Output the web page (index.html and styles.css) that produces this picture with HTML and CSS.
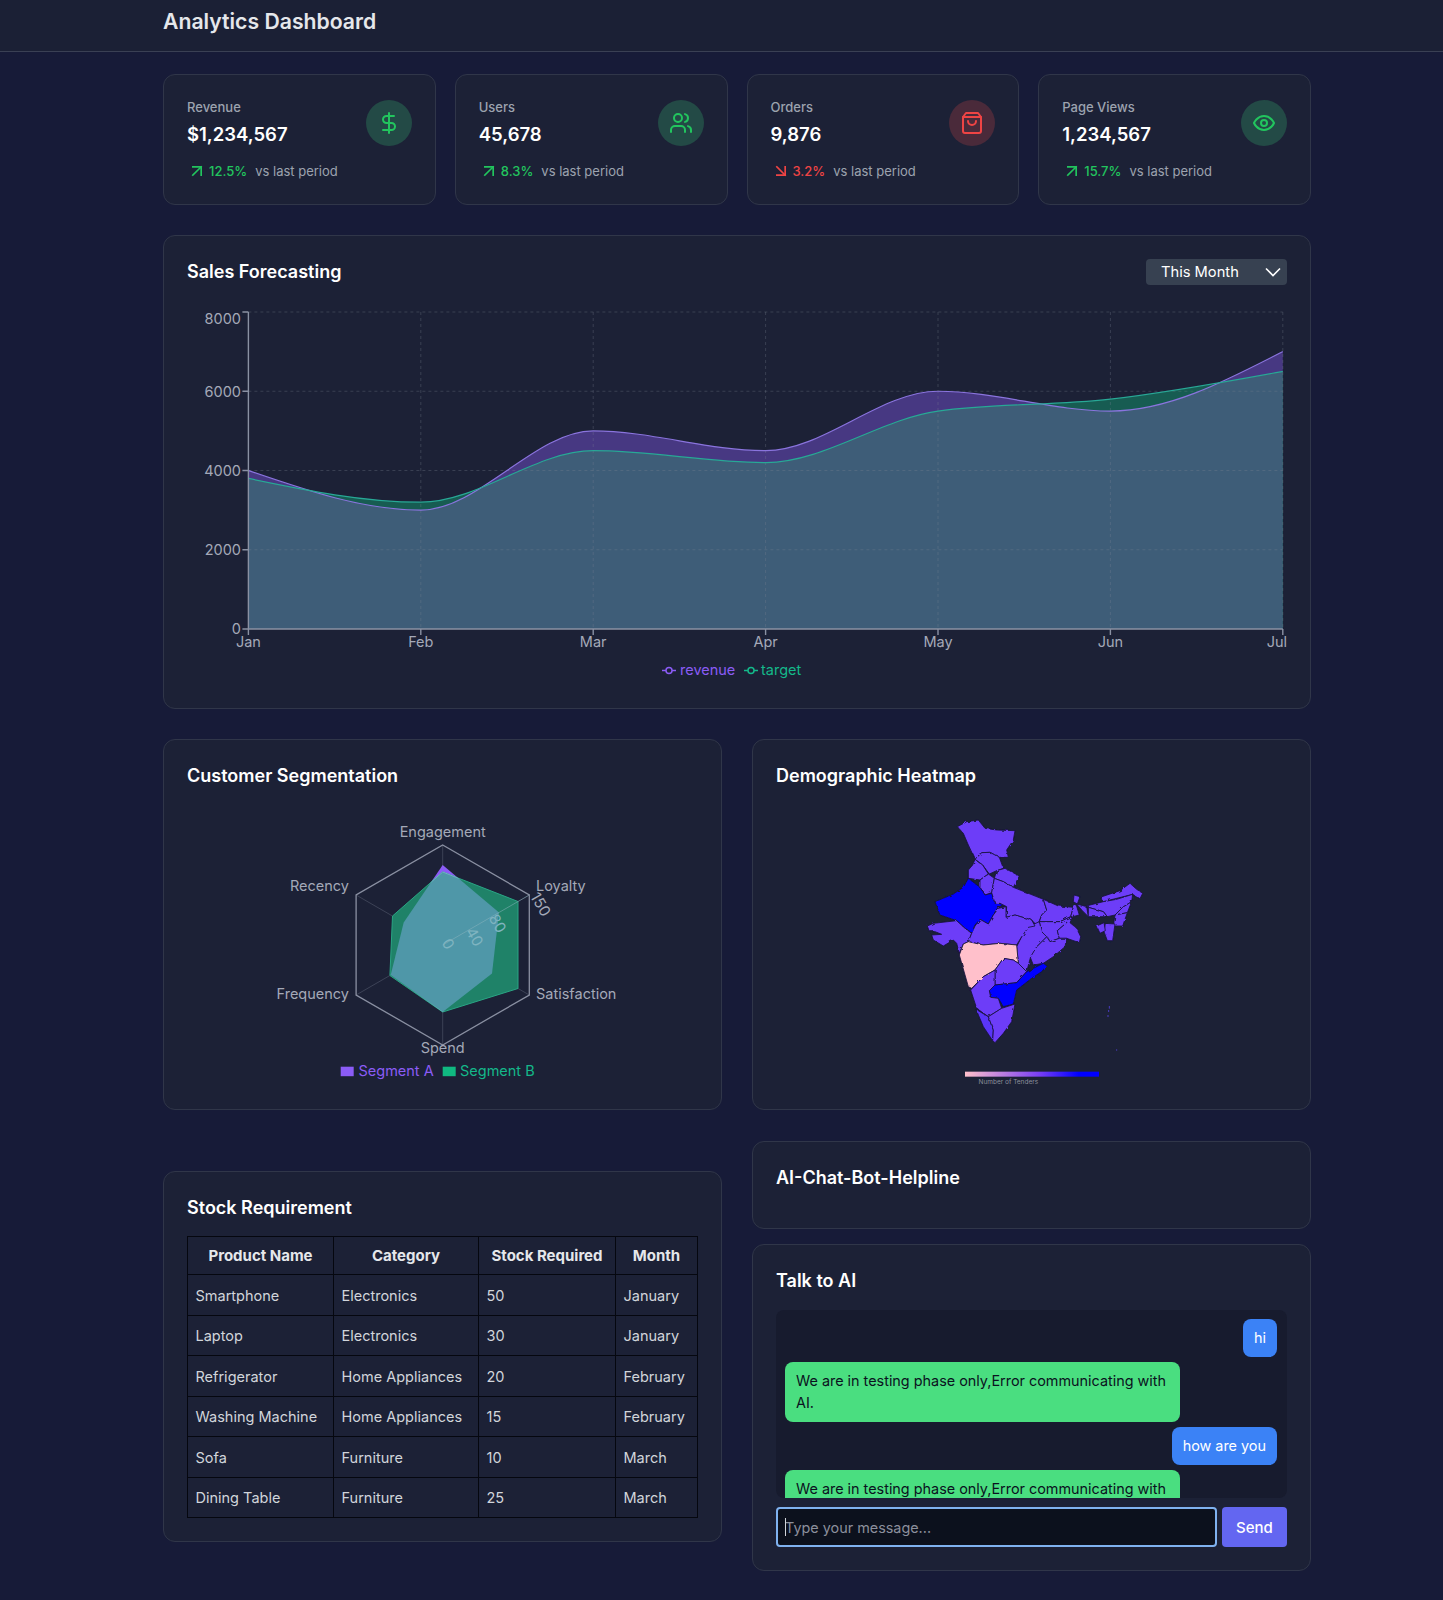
FILE: index.html
```html
<!DOCTYPE html>

<html lang="en-US">

<head>
	<meta charset="UTF-8" />
	<title>Analytics Dashboard</title>
	<link rel="stylesheet" href="styles.css">
</head>

<body>
	<header class="topbar">
		<h1>Analytics Dashboard</h1>
	</header>

	<main class="page">
		<section class="stats">
			<div class="card stat">
				<div class="stat-head">
					<div>
						<div class="stat-label">Revenue</div>
						<div class="stat-value">$1,234,567</div>
					</div>
					<div class="stat-icon good">
						<svg class="icon" viewBox="0 0 24 24"><path d="M12 2v20" /><path d="M17 5H9.5a3.5 3.5 0 0 0 0 7h5a3.5 3.5 0 0 1 0 7H6" /></svg>
					</div>
				</div>
				<div class="trend">
					<svg class="arrow up" viewBox="0 0 24 24"><path d="M7 7h10v10" /><path d="M7 17 17 7" /></svg>
					<span class="up">12.5%</span>
					<span class="trend-note">vs last period</span>
				</div>
			</div>
			<div class="card stat">
				<div class="stat-head">
					<div>
						<div class="stat-label">Users</div>
						<div class="stat-value">45,678</div>
					</div>
					<div class="stat-icon good">
						<svg class="icon" viewBox="0 0 24 24"><path d="M16 21v-2a4 4 0 0 0-4-4H6a4 4 0 0 0-4 4v2" /><circle cx="9" cy="7" r="4" /><path d="M22 21v-2a4 4 0 0 0-3-3.87" /><path d="M16 3.13a4 4 0 0 1 0 7.75" /></svg>
					</div>
				</div>
				<div class="trend">
					<svg class="arrow up" viewBox="0 0 24 24"><path d="M7 7h10v10" /><path d="M7 17 17 7" /></svg>
					<span class="up">8.3%</span>
					<span class="trend-note">vs last period</span>
				</div>
			</div>
			<div class="card stat">
				<div class="stat-head">
					<div>
						<div class="stat-label">Orders</div>
						<div class="stat-value">9,876</div>
					</div>
					<div class="stat-icon bad">
						<svg class="icon" viewBox="0 0 24 24"><path d="M6 2 3 6v14a2 2 0 0 0 2 2h14a2 2 0 0 0 2-2V6l-3-4Z" /><path d="M3 6h18" /><path d="M16 10a4 4 0 0 1-8 0" /></svg>
					</div>
				</div>
				<div class="trend">
					<svg class="arrow down" viewBox="0 0 24 24"><path d="M7 7l10 10" /><path d="M17 7v10H7" /></svg>
					<span class="down">3.2%</span>
					<span class="trend-note">vs last period</span>
				</div>
			</div>
			<div class="card stat">
				<div class="stat-head">
					<div>
						<div class="stat-label">Page Views</div>
						<div class="stat-value">1,234,567</div>
					</div>
					<div class="stat-icon good">
						<svg class="icon" viewBox="0 0 24 24"><path d="M2 12s3-7 10-7 10 7 10 7-3 7-10 7-10-7-10-7Z" /><circle cx="12" cy="12" r="3" /></svg>
					</div>
				</div>
				<div class="trend">
					<svg class="arrow up" viewBox="0 0 24 24"><path d="M7 7h10v10" /><path d="M7 17 17 7" /></svg>
					<span class="up">15.7%</span>
					<span class="trend-note">vs last period</span>
				</div>
			</div>
		</section>

		<section class="card forecast">
			<div class="forecast-head">
				<h2>Sales Forecasting</h2>
				<div class="range-select">
					<span>This Month</span>
					<svg class="chevron" viewBox="0 0 16 10"><path d="M1 1.5l7 7 7-7" /></svg>
				</div>
			</div>
			<svg class="forecast-chart" width="1100" height="390" viewBox="0 0 1100 390">
				<defs>
					<path id="rev-area" d="M61.4 170.5C118.9 190.3 176.3 210.1 233.8 210.1C291.3 210.1 348.7 130.9 406.2 130.9C463.7 130.9 521.1 150.7 578.6 150.7C636.1 150.7 693.5 91.25 751 91.25C808.5 91.25 865.9 111.1 923.4 111.1C980.9 111.1 1038.3 81.3 1095.8 51.6V329H61.4Z" />
					<path id="tgt-area" d="M61.4 178.4C118.9 190.3 176.3 202.2 233.8 202.2C291.3 202.2 348.7 150.7 406.2 150.7C463.7 150.7 521.1 162.6 578.6 162.6C636.1 162.6 693.5 119 751 111.1C808.5 103.1 865.9 105.8 923.4 99.2C980.9 92.6 1038.3 82 1095.8 71.4V329H61.4Z" />
					<clipPath id="rev-clip"><use href="#rev-area" /></clipPath>
				</defs>

				<use href="#rev-area" class="area-rev" />
				<use href="#tgt-area" class="area-tgt" />
				<use href="#tgt-area" class="area-both" clip-path="url(#rev-clip)" />

				<path class="grid" d="M61.4 12H1095.8M61.4 91.25H1095.8M61.4 170.5H1095.8M61.4 249.75H1095.8M233.8 12V329M406.2 12V329M578.6 12V329M751 12V329M923.4 12V329M1095.8 12V329" />

				<path class="line-rev" d="M61.4 170.5C118.9 190.3 176.3 210.1 233.8 210.1C291.3 210.1 348.7 130.9 406.2 130.9C463.7 130.9 521.1 150.7 578.6 150.7C636.1 150.7 693.5 91.25 751 91.25C808.5 91.25 865.9 111.1 923.4 111.1C980.9 111.1 1038.3 81.3 1095.8 51.6" />
				<path class="line-tgt" d="M61.4 178.4C118.9 190.3 176.3 202.2 233.8 202.2C291.3 202.2 348.7 150.7 406.2 150.7C463.7 150.7 521.1 162.6 578.6 162.6C636.1 162.6 693.5 119 751 111.1C808.5 103.1 865.9 105.8 923.4 99.2C980.9 92.6 1038.3 82 1095.8 71.4" />

				<path class="axis" d="M55.4 12H61.4M55.4 91.25H61.4M55.4 170.5H61.4M55.4 249.75H61.4M55.4 329H61.4M61.4 12V335M233.8 329V335M406.2 329V335M578.6 329V335M751 329V335M923.4 329V335M1095.8 329V335M61.4 329H1095.8" />

				<text class="tick end" x="54" y="24">8000</text>
				<text class="tick end" x="54" y="97">6000</text>
				<text class="tick end" x="54" y="176">4000</text>
				<text class="tick end" x="54" y="255">2000</text>
				<text class="tick end" x="54" y="334">0</text>
				<text class="tick mid" x="61.4" y="347">Jan</text>
				<text class="tick mid" x="233.8" y="347">Feb</text>
				<text class="tick mid" x="406.2" y="347">Mar</text>
				<text class="tick mid" x="578.6" y="347">Apr</text>
				<text class="tick mid" x="751" y="347">May</text>
				<text class="tick mid" x="923.4" y="347">Jun</text>
				<text class="tick end" x="1100" y="347">Jul</text>

				<path class="legend-line rev" d="M475 370.5h4M485 370.5h4" /><circle class="legend-dot rev" cx="482" cy="370.5" r="3" />
				<text class="legend rev" x="493" y="375">revenue</text>
				<path class="legend-line tgt" d="M557 370.5h4M567 370.5h4" /><circle class="legend-dot tgt" cx="564" cy="370.5" r="3" />
				<text class="legend tgt" x="574" y="375">target</text>
			</svg>
		</section>

		<section class="columns">
			<div class="column">
				<div class="card segment">
					<h2>Customer Segmentation</h2>
					<svg class="radar" width="511" height="290" viewBox="0 0 511 290">
						<defs>
							<clipPath id="seg-a-clip"><polygon points="255.7,65 312,112.5 305,173.5 255.7,212 203.7,175 216.7,122.5" /></clipPath>
						</defs>
						<path class="radar-spoke" d="M255.7 145V45M255.7 145L342.3 95M255.7 145L342.3 195M255.7 145V245M255.7 145L169.1 195M255.7 145L169.1 95" />
						<polygon class="radar-ring" points="255.7,118.3 278.8,131.7 278.8,158.3 255.7,171.7 232.6,158.3 232.6,131.7" />
						<polygon class="radar-ring" points="255.7,91.7 301.9,118.4 301.9,171.6 255.7,198.3 209.5,171.6 209.5,118.4" />
						<polygon class="radar-outer" points="255.7,45 342.3,95 342.3,195 255.7,245 169.1,195 169.1,95" />
						<polygon class="seg-a" points="255.7,65 312,112.5 305,173.5 255.7,212 203.7,175 216.7,122.5" />
						<polygon class="seg-b" points="255.7,72 331,101.5 331,188.5 255.7,212 202.9,175.5 205.5,116" />
						<polygon class="seg-both" clip-path="url(#seg-a-clip)" points="255.7,72 331,101.5 331,188.5 255.7,212 202.9,175.5 205.5,116" />
						<path class="radar-axis" d="M255.7 145L342.3 95" />

						<text class="tick mid" x="255.7" y="37">Engagement</text>
						<text class="tick" x="349" y="91">Loyalty</text>
						<text class="tick" x="349" y="199">Satisfaction</text>
						<text class="tick mid" x="255.7" y="252.5">Spend</text>
						<text class="tick end" x="162" y="199">Frequency</text>
						<text class="tick end" x="162" y="91">Recency</text>

						<text class="radar-value dim mid" transform="translate(256.5 146.5) rotate(60)">0</text>
						<text class="radar-value dim mid" transform="translate(283 139.5) rotate(60)">40</text>
						<text class="radar-value dim mid" transform="translate(306 126) rotate(60)">80</text>
						<text class="radar-value mid" transform="translate(349 107) rotate(60)">150</text>

						<rect class="swatch-a" x="153.7" y="266.7" width="13" height="9.5" />
						<text class="legend rev" x="171.5" y="275.5">Segment A</text>
						<rect class="swatch-b" x="255.7" y="266.7" width="13" height="9.5" />
						<text class="legend tgt" x="273" y="275.5">Segment B</text>
					</svg>
				</div>
				<div class="card stock">
					<h2>Stock Requirement</h2>
					<table class="stock-table">
						<thead>
							<tr><th class="col-name">Product Name</th><th class="col-cat">Category</th><th class="col-qty">Stock Required</th><th>Month</th></tr>
						</thead>
						<tbody>
							<tr><td>Smartphone</td><td>Electronics</td><td>50</td><td>January</td></tr>
							<tr><td>Laptop</td><td>Electronics</td><td>30</td><td>January</td></tr>
							<tr><td>Refrigerator</td><td>Home Appliances</td><td>20</td><td>February</td></tr>
							<tr><td>Washing Machine</td><td>Home Appliances</td><td>15</td><td>February</td></tr>
							<tr><td>Sofa</td><td>Furniture</td><td>10</td><td>March</td></tr>
							<tr><td>Dining Table</td><td>Furniture</td><td>25</td><td>March</td></tr>
						</tbody>
					</table>
				</div>
			</div>

			<div class="column">
				<div class="card segment">
					<h2>Demographic Heatmap</h2>
					<svg class="heatmap" width="511" height="290" viewBox="-372 0 1533 870">
						<defs>
							<linearGradient id="tenders">
								<stop offset="0" stop-color="#ffc0cb" />
								<stop offset="0.55" stop-color="#7a3ff5" />
								<stop offset="0.85" stop-color="#0000ff" />
							</linearGradient>
							<!-- roughens the straight state edges -->
							<filter id="rough" x="-5%" y="-5%" width="110%" height="110%">
								<feTurbulence type="fractalNoise" baseFrequency="0.07" numOctaves="2" seed="4" />
								<feDisplacementMap in="SourceGraphic" scale="9" />
							</filter>
						</defs>
						<g class="states" filter="url(#rough)">
							<!-- jammu and kashmir, then north to south -->
							<polygon points="172,80 200,65 235,60 255,85 290,90 345,92 340,120 320,150 325,172 298,172 270,157 245,158 225,178 205,135 190,100" />
							<polygon points="245,158 270,157 298,172 310,205 290,212 268,222 248,195 225,178" />
							<polygon points="225,178 248,195 265,222 240,240 205,235 205,210 218,195" />
							<polygon points="290,212 315,205 358,228 340,262 310,245 283,235" />
							<polygon points="240,240 265,222 283,235 275,278 255,285 240,262" />
							<polygon class="top" points="205,235 240,262 255,285 275,280 285,310 312,312 292,325 280,345 265,372 240,358 225,375 215,398 195,385 170,362 120,345 105,305 160,282 190,262" />
							<polygon points="82,378 100,370 170,362 195,385 215,400 205,425 190,432 178,460 170,430 160,420 130,438 100,420 95,405 125,403 105,395 88,395" />
							<polygon points="283,235 310,245 340,262 430,298 440,330 425,345 412,378 395,360 345,345 318,352 320,320 300,310 285,310 275,278" />
							<polygon points="430,298 475,318 520,322 512,350 480,365 418,365 425,345 440,330" />
							<polygon points="418,365 480,365 512,350 500,368 472,392 478,415 450,425 425,395" />
							<polygon points="520,322 528,312 538,345 518,350 510,368 530,385 542,410 538,428 500,415 478,415 472,392 500,368 512,350" />
							<polygon points="440,410 450,425 478,415 500,415 495,440 460,470 430,490 400,495 390,470 410,440" />
							<polygon points="385,380 418,365 425,395 440,410 410,440 392,470 380,515 355,490 350,440 365,410" />
							<polygon points="215,400 225,378 240,358 265,372 280,345 295,325 318,320 318,352 345,345 395,360 405,378 385,382 365,410 350,435 300,430 250,435 205,425" />
							<polygon class="low" points="205,425 250,435 300,430 350,435 355,490 340,480 310,475 285,510 250,530 215,565 205,560 178,465 190,432" />
							<polygon points="310,475 340,480 355,490 380,515 350,548 285,555 285,510" />
							<polygon class="top" points="285,555 350,548 380,515 430,490 440,497 425,515 395,535 350,570 340,612 310,620 295,595 272,592 268,572" />
							<polygon points="250,530 285,510 285,555 268,572 272,592 295,595 305,625 265,650 230,625 212,570" />
							<polygon class="mid-state" points="228,628 265,650 280,690 278,722 250,680" />
							<polygon points="305,625 345,612 335,665 310,700 285,728 278,722 280,690 265,650" />
							<!-- north east -->
							<polygon points="522,285 540,290 532,312 520,305" />
							<polygon points="530,312 560,320 565,350 545,330" />
							<polygon points="600,292 660,272 690,250 710,268 728,280 720,296 698,283 610,305" />
							<polygon points="558,318 610,305 650,298 698,283 695,305 668,322 645,345 622,350 610,335 565,322" />
							<polygon points="565,322 610,335 622,350 565,350" />
							<polygon points="668,322 695,305 682,338 645,345" />
							<polygon points="645,345 682,338 668,378 640,378" />
							<polygon points="616,370 645,372 638,422 622,422 612,395" />
							<polygon points="590,378 612,368 616,392 600,400" />
						</g>
						<path class="islands" d="M628 618v8M626 630v6M624 645v6M650 748v4" />
						<rect x="195" y="815" width="402" height="15" fill="url(#tenders)" />
						<text class="map-caption" x="325" y="851">Number of Tenders</text>
					</svg>
				</div>
				<div class="card helpline">
					<h2>AI-Chat-Bot-Helpline</h2>
				</div>
				<div class="card talk">
					<h2>Talk to AI</h2>
					<div class="chat-box">
						<div class="bubble user">hi</div>
						<div class="bubble bot">We are in testing phase only,Error communicating with AI.</div>
						<div class="bubble user">how are you</div>
						<div class="bubble bot">We are in testing phase only,Error communicating with AI.</div>
					</div>
					<form class="chat-form" onsubmit="return false">
						<div class="chat-field">
							<input class="chat-input" type="text" placeholder="Type your message..." />
							<span class="caret"></span>
						</div>
						<button class="chat-send" type="submit">Send</button>
					</form>
				</div>
			</div>
		</section>
	</main>
</body>

</html>
```

FILE: styles.css
```css
* {
	box-sizing: border-box;
}

body {
	margin: 0;
	height: 1600px;
	overflow: hidden;
	font-family: Inter, "Liberation Sans", sans-serif;
	color: white;
	background-color: #171b38;
}

h1, h2 {
	margin: 0;
}

h2 {
	padding-top: 1px;
	font-size: 18px;
	line-height: 28px;
	font-weight: 600;
}

.topbar {
	height: 52px;
	padding-left: 163px;
	background-color: #1b2035;
	border-bottom: 1px solid #3a4054;
}

.topbar h1 {
	font-size: 21.2px;
	line-height: 42px;
	font-weight: 600;
	color: #e5e7eb;
}

.page {
	width: 1148px;
	margin-left: 163px;
	padding-top: 22px;
}

.card {
	background-color: #1c2136;
	border: 1px solid #303649;
	border-radius: 12px;
	padding: 21px 23px 22px;
}

/* stat cards */

.stats {
	display: grid;
	grid-template-columns: repeat(4, 1fr);
	grid-gap: 19px;
}

.stat {
	height: 131px;
}

.stat-head {
	display: flex;
	justify-content: space-between;
	align-items: flex-start;
}

.stat-label {
	margin-top: 1px;
	font-size: 13px;
	line-height: 20px;
	font-weight: 500;
	color: #9ca3af;
}

.stat-value {
	margin-top: 3px;
	font-size: 18.5px;
	line-height: 28px;
	font-weight: 600;
}

.stat-icon {
	width: 46px;
	height: 46px;
	margin-top: 4px;
	border-radius: 50%;
	display: flex;
	align-items: center;
	justify-content: center;
}

.stat-icon.good {
	background-color: #234a46;
	color: #22c55e;
}

.stat-icon.bad {
	background-color: #4a2a3a;
	color: #ef4444;
}

.icon {
	width: 24px;
	height: 24px;
	fill: none;
	stroke: currentColor;
	stroke-width: 2;
	stroke-linecap: round;
	stroke-linejoin: round;
}

.trend {
	margin-top: 13px;
	display: flex;
	align-items: center;
	font-size: 13px;
	line-height: 20px;
	font-weight: 500;
}

.arrow {
	width: 20px;
	height: 20px;
	margin-right: 2px;
	fill: none;
	stroke: currentColor;
	stroke-width: 2;
	stroke-linecap: square;
}

.up {
	color: #22c55e;
}

.down {
	color: #ef4444;
}

.trend-note {
	margin-left: 8px;
	font-weight: 400;
	color: #9ca3af;
}

/* forecast */

.forecast {
	height: 474px;
	margin-top: 30px;
	padding-bottom: 0;
}

.forecast-head {
	display: flex;
	justify-content: space-between;
	align-items: center;
	height: 28px;
	margin-top: 1px;
}

.forecast-head h2 {
	padding-top: 0;
}

.range-select {
	width: 141px;
	height: 26px;
	padding: 0 6px 0 15px;
	display: flex;
	align-items: center;
	justify-content: space-between;
	background-color: #374151;
	border-radius: 4px;
	font-size: 14.7px;
}

.chevron {
	width: 16px;
	height: 10px;
	fill: none;
	stroke: white;
	stroke-width: 1.6;
}

.forecast-chart {
	display: block;
	margin-top: 14px;
}

.area-rev {
	fill: #473882;
}

.area-tgt {
	fill: #175c52;
}

.area-both {
	fill: #3e5d78;
}

.grid {
	fill: none;
	stroke: #7d8496;
	stroke-opacity: 0.3;
	stroke-dasharray: 3 3;
}

.line-rev, .line-tgt {
	fill: none;
	stroke-width: 1.2;
}

.line-rev {
	stroke: #8a74de;
}

.line-tgt {
	stroke: #28a896;
}

.axis {
	fill: none;
	stroke: #8a91a3;
	stroke-width: 1.4;
}

.tick {
	font-size: 14.5px;
	fill: #a4a9b8;
}

.end {
	text-anchor: end;
}

.mid {
	text-anchor: middle;
}

.legend {
	font-size: 14.5px;
}

.legend.rev {
	fill: #8b5cf6;
}

.legend.tgt {
	fill: #14b88a;
}

.legend-line {
	fill: none;
	stroke-width: 1.5;
}

.legend-line.rev, .legend-dot.rev {
	stroke: #8b5cf6;
}

.legend-line.tgt, .legend-dot.tgt {
	stroke: #14b88a;
}

.legend-dot {
	fill: #1c2136;
	stroke-width: 1.5;
}

/* two columns */

.columns {
	margin-top: 30px;
	display: grid;
	grid-template-columns: 1fr 1fr;
	grid-gap: 30px;
}

.column {
	display: flex;
	flex-direction: column;
}

.segment {
	height: 371px;
}

.radar, .heatmap {
	display: block;
	margin-top: 10px;
}

.radar-spoke, .radar-ring {
	fill: none;
	stroke: #3c4256;
}

.radar-outer {
	fill: none;
	stroke: #8a90a2;
	stroke-width: 1.3;
}

.radar-axis {
	fill: none;
	stroke: #8db6c0;
	stroke-opacity: 0.5;
}

.seg-a {
	fill: #8b5cf6;
}

.seg-b {
	fill: #1f8268;
	stroke: #2aa584;
}

.seg-both {
	fill: #4f97a8;
	stroke: #6fb4c0;
}

.radar-value {
	font-size: 15px;
	fill: #a4a9b8;
}

.radar-value.dim {
	fill: #7fb4c0;
}

.swatch-a {
	fill: #8b5cf6;
}

.swatch-b {
	fill: #10b981;
}

.states polygon {
	fill: #6d3cf8;
	stroke: #17123c;
	stroke-width: 2.5;
	stroke-linejoin: round;
}

.states .top {
	fill: #0000ff;
}

.states .low {
	fill: #ffc0cb;
}

.states .mid-state {
	fill: #5a35f8;
}

.islands {
	fill: none;
	stroke: #4a3cc0;
	stroke-width: 3;
}

.map-caption {
	font-size: 19.5px;
	text-anchor: middle;
	fill: #8b8f9c;
}

/* stock table */

.stock {
	height: 371px;
	margin-top: 61px;
}

.stock-table {
	width: 511px;
	margin-top: 14px;
	table-layout: fixed;
	border-collapse: collapse;
	font-size: 14.5px;
	color: #d1d5db;
}

.stock-table th, .stock-table td {
	border: 1px solid #05070f;
	padding: 0 7.5px;
}

.stock-table th {
	height: 38px;
	font-size: 15px;
	font-weight: 700;
	text-align: center;
	color: #e5e7eb;
}

.stock-table td {
	height: 40.5px;
	padding-top: 1px;
}

.col-name {
	width: 146px;
}

.col-cat {
	width: 145px;
}

.col-qty {
	width: 137px;
}

/* chat */

.helpline {
	height: 88px;
	margin-top: 31px;
}

.talk {
	height: 327px;
	margin-top: 15px;
}

.chat-box {
	height: 188px;
	margin-top: 15px;
	padding: 9px 10px 0 9px;
	display: flex;
	flex-direction: column;
	gap: 5px;
	overflow: hidden;
	background-color: #171b2e;
	border-radius: 8px;
}

.bubble {
	flex: none;
	padding: 8px 11px;
	font-size: 14.4px;
	line-height: 22px;
	border-radius: 8px;
}

.bubble.user {
	align-self: flex-end;
	background-color: #3b82f6;
	color: white;
}

.bubble.bot {
	align-self: flex-start;
	width: 395px;
	background-color: #4ade80;
	color: #0b1220;
}

.chat-form {
	display: flex;
	gap: 5px;
	margin-top: 9px;
}

.chat-field {
	position: relative;
	flex: 1;
}

.chat-input {
	display: block;
	width: 100%;
	height: 40px;
	padding: 0 7px;
	font-family: inherit;
	font-size: 14.4px;
	color: white;
	background-color: #0c111d;
	border: 2px solid #7fb2f0;
	border-radius: 4px;
	outline: none;
}

.chat-input::placeholder {
	color: #8b8f9c;
}

.caret {
	position: absolute;
	left: 9px;
	top: 11px;
	width: 1px;
	height: 18px;
	background-color: #d1d5db;
}

.chat-send {
	width: 65px;
	height: 40px;
	font-family: inherit;
	font-size: 15px;
	font-weight: 500;
	color: white;
	background-color: #6366f1;
	border: none;
	border-radius: 4px;
}
```
